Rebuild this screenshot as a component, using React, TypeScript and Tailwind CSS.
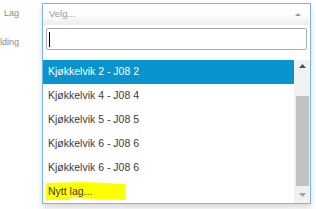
const ITEMS = [
  "Kjøkkelvik 2 - J08 2",
  "Kjøkkelvik 4 - J08 4",
  "Kjøkkelvik 5 - J08 5",
  "Kjøkkelvik 6 - J08 6",
  "Kjøkkelvik 6 - J08 6",
];

function Triangle({ up, color, w, h }: { up: boolean; color: string; w: number; h: number }) {
  return (
    <svg width={w} height={h} viewBox={`0 0 ${w} ${h}`}>
      <polygon points={up ? `0,${h} ${w / 2},0 ${w},${h}` : `0,0 ${w},0 ${w / 2},${h}`} fill={color} />
    </svg>
  );
}

export default function App() {
  return (
    <div className="w-[316px] h-[209px] bg-white overflow-hidden flex items-start font-['Liberation_Sans',Arial,sans-serif]">
      {/* labels */}
      <div className="w-[19px] shrink-0 flex flex-col items-end pt-[7px] text-[9px] leading-[12px] text-[#8a8a8a]">
        <div className="flex justify-end w-full whitespace-nowrap">Lag</div>
        <div className="flex justify-end w-full whitespace-nowrap mt-[17px]">Melding</div>
      </div>

      {/* open select */}
      <div className="ml-[23px] mt-[3px] w-[269px] h-[201px] shrink-0 border border-[#79b5f0] flex flex-col bg-white shadow-[0_4px_6px_rgba(0,0,0,0.15)]">
        <div className="h-[21px] shrink-0 flex items-center justify-between pl-[6px] pr-[9px] bg-gradient-to-b from-white from-50% to-[#ececec]">
          <span className="text-[9.5px] text-[#999]">Velg...</span>
          <Triangle up color="#999" w={6} h={3} />
        </div>

        <div className="shrink-0 px-[3px] pt-[3px] pb-[10px]">
          <div className="h-[22px] border border-[#aaa] rounded-[2px] flex items-center pl-[2px]">
            <span className="w-px h-[15px] bg-black" />
          </div>
        </div>

        <div className="flex-1 flex min-h-0">
          <div className="flex-1 overflow-hidden text-[10.5px] text-[#3a3a3a]">
            {ITEMS.map((t, i) => (
              <div
                key={i}
                className={
                  "h-[24px] flex items-center pl-[5px] whitespace-nowrap " +
                  (i === 0 ? "bg-[#0994cf] text-white" : "")
                }
              >
                {t}
              </div>
            ))}
            <div className="h-[24px] flex items-center pl-[5px] relative">
              <svg className="absolute left-[2px] top-[2px]" width="82" height="19" viewBox="0 0 82 19">
                <polygon points="1,1 40,0 80,2 80,18 50,17 26,16 24,18 1,18" fill="#ffff00" />
              </svg>
              <span className="relative">Nytt lag...</span>
            </div>
          </div>

          {/* scrollbar */}
          <div className="w-[16px] shrink-0 bg-[#f1f1f1] flex flex-col items-center">
            <div className="h-[10px] flex items-center justify-center pt-[2px]">
              <Triangle up color="#505050" w={7} h={4} />
            </div>
            <div className="h-[26px]" />
            <div className="h-[90px] w-[13px] ml-[1px] bg-[#c1c1c1]" />
            <div className="flex-1 flex items-center justify-center">
              <Triangle up={false} color="#a3a3a3" w={7} h={4} />
            </div>
          </div>
        </div>
      </div>
    </div>
  );
}
